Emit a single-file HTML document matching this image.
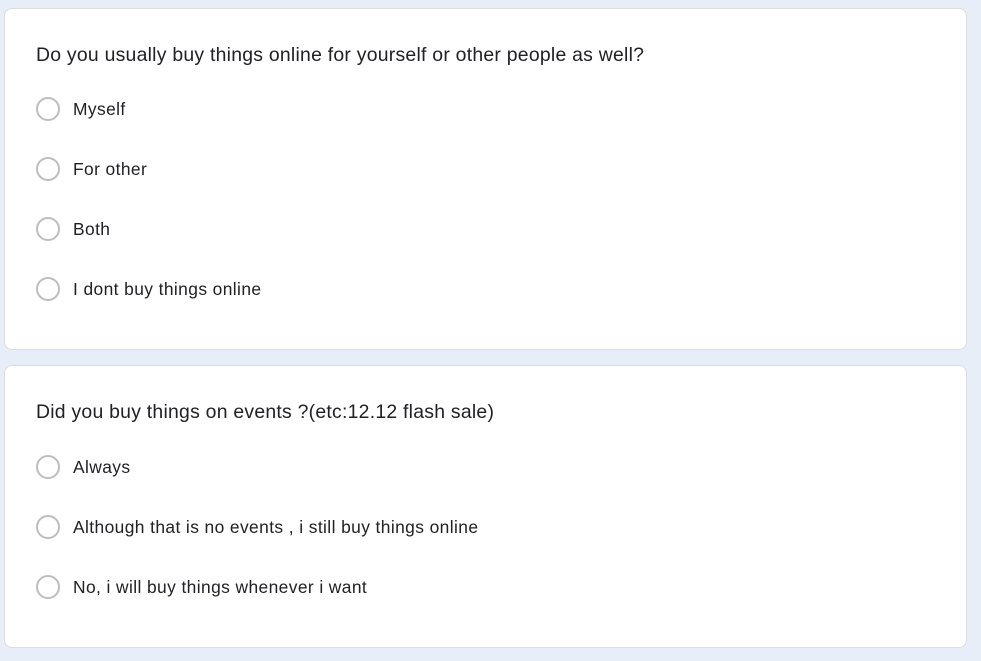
<!DOCTYPE html>
<html><head><style>
body{margin:0;background:#e8eef8;width:981px;height:661px;overflow:hidden;font-family:"Liberation Sans",Arial,sans-serif;color:#202124}
.card{position:absolute;left:4px;width:963px;background:#fff;border:1px solid #dadce0;border-radius:8px;box-sizing:border-box}
.q{position:absolute;left:31px;font-size:19.4px;letter-spacing:0.25px;line-height:22px}
.o{position:absolute;left:31px;height:24px;display:flex;align-items:center;font-size:17.4px;letter-spacing:0.4px}
.r{width:20px;height:20px;border:2px solid #bdbdbd;border-radius:50%;margin-right:13px;flex:none}
</style></head><body>
<div class="card" style="top:8px;height:342px">
<div class="q" style="top:35px">Do you usually buy things online for yourself or other people as well?</div>
<div class="o" style="top:88px"><div class="r"></div>Myself</div>
<div class="o" style="top:148px"><div class="r"></div>For other</div>
<div class="o" style="top:208px"><div class="r"></div>Both</div>
<div class="o" style="top:268px"><div class="r"></div>I dont buy things online</div>
</div>
<div class="card" style="top:365px;height:283px">
<div class="q" style="top:35px">Did you buy things on events ?(etc:12.12 flash sale)</div>
<div class="o" style="top:89px"><div class="r"></div>Always</div>
<div class="o" style="top:149px"><div class="r"></div>Although that is no events , i still buy things online</div>
<div class="o" style="top:209px"><div class="r"></div>No, i will buy things whenever i want</div>
</div>
</body></html>
